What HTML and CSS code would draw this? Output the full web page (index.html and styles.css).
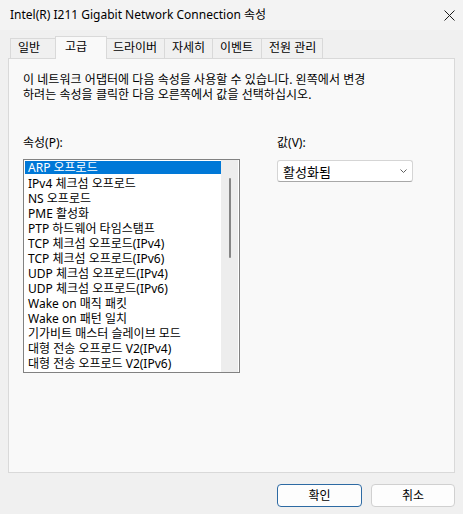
FILE: index.html
```html
<!DOCTYPE html>
<html lang="ko">
<head>
<meta charset="utf-8">
<link rel="stylesheet" href="styles.css">
</head>
<body>
<div class="window">
  <div class="titlebar">
    <span class="title">Intel(R) I211 Gigabit Network Connection 속성</span>
    <svg class="close" width="11" height="11" viewBox="0 0 11 11"><path d="M0.5 0.5 L10.5 10.5 M10.5 0.5 L0.5 10.5" stroke="#1b1b1b" stroke-width="1" fill="none"/></svg>
  </div>
  <div class="body">
    <div class="tabs">
      <div class="tab t1">일반</div>
      <div class="tab t2 active">고급</div>
      <div class="tab t3">드라이버</div>
      <div class="tab t4">자세히</div>
      <div class="tab t5">이벤트</div>
      <div class="tab t6">전원 관리</div>
    </div>
    <div class="panel">
      <p class="desc">이 네트워크 어댑터에 다음 속성을 사용할 수 있습니다. 왼쪽에서 변경<br>하려는 속성을 클릭한 다음 오른쪽에서 값을 선택하십시오.</p>
      <div class="cols">
        <div class="col-left">
          <div class="label">속성(P):</div>
          <div class="listbox">
            <ul class="items">
              <li class="sel">ARP 오프로드</li>
              <li>IPv4 체크섬 오프로드</li>
              <li>NS 오프로드</li>
              <li>PME 활성화</li>
              <li>PTP 하드웨어 타임스탬프</li>
              <li>TCP 체크섬 오프로드(IPv4)</li>
              <li>TCP 체크섬 오프로드(IPv6)</li>
              <li>UDP 체크섬 오프로드(IPv4)</li>
              <li>UDP 체크섬 오프로드(IPv6)</li>
              <li>Wake on 매직 패킷</li>
              <li>Wake on 패턴 일치</li>
              <li>기가비트 매스터 슬레이브 모드</li>
              <li>대형 전송 오프로드 V2(IPv4)</li>
              <li>대형 전송 오프로드 V2(IPv6)</li>
            </ul>
            <div class="scrollbar"><div class="thumb"></div></div>
          </div>
        </div>
        <div class="col-right">
          <div class="label">값(V):</div>
          <div class="select">
            <span>활성화됨</span>
            <svg class="chev" width="7" height="4" viewBox="0 0 7 4"><path d="M0.5 0.5 L3.5 3.5 L6.5 0.5" stroke="#5f5f5f" stroke-width="1" fill="none"/></svg>
          </div>
        </div>
      </div>
    </div>
    <div class="buttons">
      <div class="btn default">확인</div>
      <div class="btn">취소</div>
    </div>
  </div>
</div>
</body>
</html>
```
FILE: styles.css
```css
* { box-sizing: border-box; }
html, body { margin: 0; padding: 0; }
body {
  width: 463px;
  height: 514px;
  background: #f0f0f0;
  font-family: "Noto Sans", "Noto Sans CJK KR", sans-serif;
  font-size: 12px;
  color: #000;
  overflow: hidden;
}
.window { width: 463px; height: 514px; display: flex; flex-direction: column; }
.titlebar {
  height: 30px;
  background: #f3f3f3;
  display: flex;
  align-items: center;
  justify-content: space-between;
  padding: 0 7px 0 10px;
}
.title { font-size: 12px; line-height: 16px; color: #000; }
.close { display: block; margin-right: 1px; }
.body { flex: 1; display: flex; flex-direction: column; padding: 0 8px; }
.tabs {
  display: flex;
  align-items: flex-end;
  height: 28px;
  padding-top: 6px;
  padding-left: 2px;
  position: relative;
  z-index: 1;
}
.tab {
  height: 20px;
  border: 1px solid #d9d9d9;
  border-bottom: none;
  background: #f0f0f0;
  line-height: 18px;
  margin-bottom: 0;
  padding-left: 7px;
  white-space: nowrap;
}
.tab + .tab { border-left: none; }
.t1 { width: 47px; }
.t3 { width: 60px; }
.t4 { width: 48px; }
.t5 { width: 49px; }
.t6 { width: 61px; }
.tab.active {
  width: 52px;
  height: 23px;
  margin: 0 -2px -1px -2px;
  background: #f9f9f9;
  border-left: 1px solid #d9d9d9;
  position: relative;
  z-index: 2;
  padding-left: 9px;
  line-height: 19px;
}
.tab.t3 { padding-left: 8px; }
.panel {
  height: 415px;
  background: #f9f9f9;
  border: 1px solid #d9d9d9;
  padding: 13px 14px 0 14px;
}
.desc { margin: 0; line-height: 15px; letter-spacing: 0.05px; }
.cols { display: flex; margin-top: 33px; }
.col-left { width: 254px; }
.label { line-height: 15px; }
.listbox {
  margin-top: 9px;
  width: 217px;
  height: 214px;
  border: 1px solid #828282;
  background: #fff;
  display: flex;
  padding: 1px 0 0 1px;
}
.items { list-style: none; margin: 0; padding: 0; width: 196px; }
.items li { height: 15px; line-height: 15px; padding-left: 3px; white-space: nowrap; }
.items li.sel { background: #0078d7; color: #fff; height: 13px; line-height: 13px; margin-bottom: 2px; }
.scrollbar {
  width: 17px;
  margin-top: -1px;
  background: #ededed;
  display: flex;
  justify-content: center;
  padding-top: 18px;
}
.thumb { width: 2px; height: 80px; background: #858585; border-radius: 1px; margin-left: 1px; }
.col-right { width: 136px; }
.select {
  margin-top: 10px;
  width: 136px;
  height: 22px;
  background: #fff;
  border: 1px solid #d5d5d5;
  border-bottom-color: #a8a8a8;
  border-radius: 3px;
  display: flex;
  align-items: center;
  justify-content: space-between;
  padding: 0 5px 0 5px;
  font-size: 13px;
}
.chev { display: block; }
.buttons {
  display: flex;
  justify-content: flex-end;
  gap: 9px;
  margin-top: 11px;
}
.btn {
  width: 84px;
  height: 23px;
  border: 1px solid #d0d0d0;
  border-radius: 4px;
  background: #fdfdfd;
  text-align: center;
  line-height: 21px;
}
.btn.default { width: 85px; border-color: #2d6aa3; }
```
